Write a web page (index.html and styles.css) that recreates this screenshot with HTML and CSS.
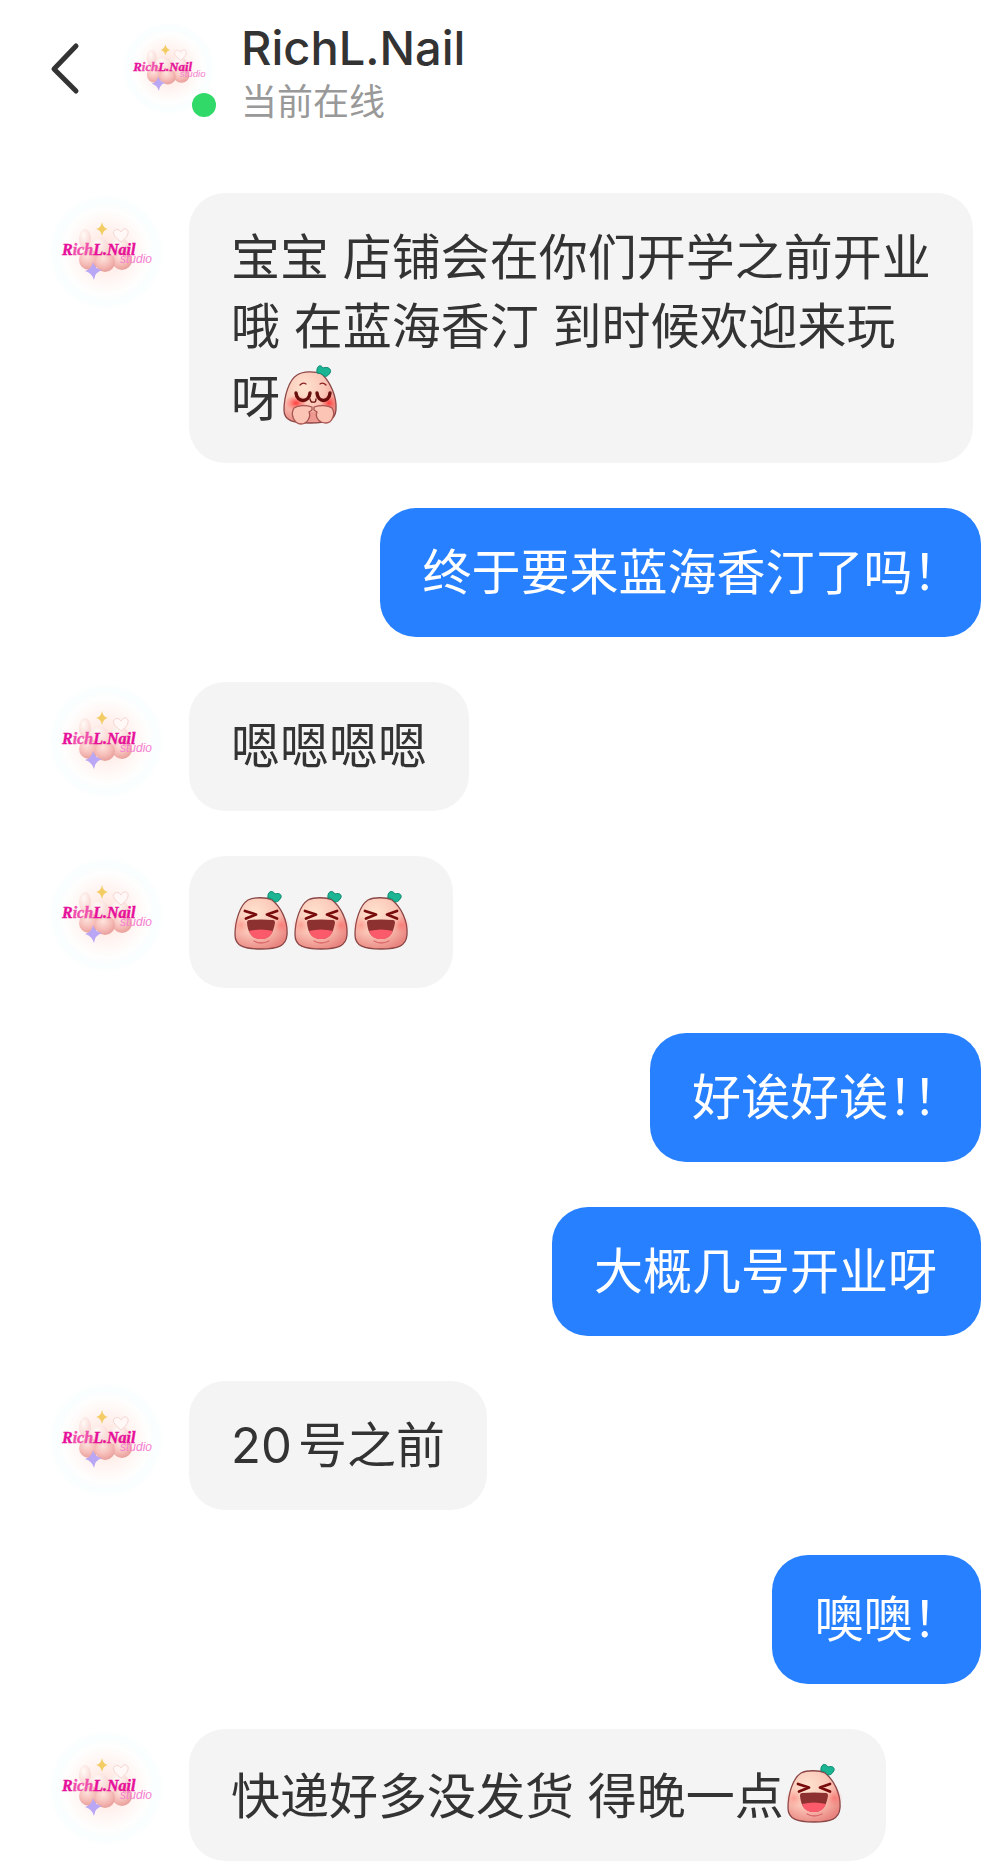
FILE: index.html
```html
<!DOCTYPE html>
<html lang="zh-CN">
<head>
<meta charset="UTF-8">
<meta name="viewport" content="width=device-width, initial-scale=1.0">
<title>RichL.Nail</title>
<link rel="stylesheet" href="styles.css">
</head>
<body>
    <!-- Shared drawings -->
    <svg class="sprite" width="0" height="0" aria-hidden="true">
        <defs>
            <radialGradient id="halo">
                <stop offset="0" stop-color="#ffe0d8"/>
                <stop offset="0.45" stop-color="#fff4f1"/>
                <stop offset="0.72" stop-color="#fefefd"/>
                <stop offset="0.88" stop-color="#f9fefe"/>
                <stop offset="1" stop-color="#ffffff"/>
            </radialGradient>
            <radialGradient id="pearl" cx="0.4" cy="0.3" r="0.7">
                <stop offset="0" stop-color="#fde3dd"/>
                <stop offset="0.6" stop-color="#f6bdb8"/>
                <stop offset="1" stop-color="#e9a09c"/>
            </radialGradient>
            <radialGradient id="pearlLight" cx="0.4" cy="0.3" r="0.7">
                <stop offset="0" stop-color="#fffaf6"/>
                <stop offset="1" stop-color="#f9d3d0"/>
            </radialGradient>
            <radialGradient id="skin" cx="0.38" cy="0.3" r="0.75">
                <stop offset="0" stop-color="#fee3cf"/>
                <stop offset="0.55" stop-color="#fbc6b7"/>
                <stop offset="1" stop-color="#e98580"/>
            </radialGradient>
            <radialGradient id="blush">
                <stop offset="0" stop-color="#ff3b3b"/>
                <stop offset="1" stop-color="#ff5a55" stop-opacity="0"/>
            </radialGradient>
        </defs>
        <symbol id="logo" viewBox="0 0 117 117">
            <circle cx="58" cy="59" r="58" fill="url(#halo)"/>
            <ellipse cx="37" cy="46" rx="6" ry="10" fill="url(#pearlLight)"/>
            <circle cx="51" cy="54" r="10" fill="url(#pearlLight)"/>
            <circle cx="71" cy="54" r="10" fill="url(#pearlLight)"/>
            <circle cx="41" cy="67" r="10" fill="url(#pearl)"/>
            <circle cx="74" cy="67" r="10" fill="url(#pearl)"/>
            <circle cx="57" cy="69" r="10" fill="url(#pearl)"/>
            <path d="M73 49c-5-4-9-8-7-11 2-3 6-1 7 1 2-4 6-4 7-1 1 4-3 8-7 11z" fill="#fff8f6" stroke="#f6d5d2"/>
            <path d="M54 29q1 6 6 7-5 1-6 7-1-6-6-7 5-1 6-7z" fill="#f3cc63"/>
            <path d="M45 69q2 7 9 8-7 2-8 10-2-7-9-9 7-2 8-9z" fill="#b9a6f5"/>
            <text class="logo-name" x="14" y="62"><tspan class="logo-strong">R</tspan>ich<tspan class="logo-strong">L.Nail</tspan></text>
            <text class="logo-studio" x="72" y="70">studio</text>
        </symbol>
        <symbol id="laugh" viewBox="0 0 60 66">
            <path d="M17 14C23 11 35 11 41 14C50 21 57 35 56 49C55 60 47 63 30 63C13 63 4 60 4 49C4 35 9 19 17 14Z" fill="url(#skin)" stroke="#8c4747" stroke-width="1.3"/>
            <circle cx="10" cy="39" r="9" fill="url(#blush)" opacity="0.3"/>
            <circle cx="50" cy="39" r="9" fill="url(#blush)" opacity="0.4"/>
            <path d="M37 12C36 6 41 3 44 8C49 6 52 10 49 13C48 15 46 16 44 16C42 13 40 12 37 12Z" fill="#1bb594" stroke="#0e8a70"/>
            <path d="M14 25L25 28.5L15 32.5M46 25L36 28.5L46 32.5" fill="none" stroke="#780b0b" stroke-width="2.8" stroke-linejoin="round" stroke-linecap="round"/>
            <path d="M18 34Q30 33 42 34Q44 34 44 37C42 48 38 53 30 53C22 53 17 48 16 37Q16 34 18 34Z" fill="#8c3030"/>
            <path d="M18 45Q30 42 42 45C39 51 36 53 30 53C24 53 20 51 18 45Z" fill="#fa5a6a"/>
            <path d="M23 55Q30 59 38 55" fill="none" stroke="#d9696b" stroke-width="1.3" stroke-linecap="round"/>
        </symbol>
        <symbol id="thanks" viewBox="0 0 60 66">
            <path d="M17 14C23 10 35 10 42 13C50 21 57 35 56 49C55 60 47 62 30 62C13 62 4 60 4 49C4 35 9 19 17 14Z" fill="url(#skin)" stroke="#8c4747" stroke-width="1.3"/>
            <ellipse cx="16" cy="42" rx="11" ry="8" fill="url(#blush)"/>
            <ellipse cx="49" cy="42" rx="8" ry="8" fill="url(#blush)"/>
            <path d="M37 12C36 6 40 2 43 7C49 5 52 9 50 12C48 15 46 16 44 15C42 13 40 12 37 12Z" fill="#1bb594" stroke="#0e8a70"/>
            <path d="M20 24Q23 21 26 23M40 23Q43 21 46 24" fill="none" stroke="#8a2020" stroke-width="1.3" stroke-linecap="round"/>
            <path d="M16 32C17 42 29 42 30 32M37 32C38 42 49 42 50 32" fill="none" stroke="#690d0d" stroke-width="3.4" stroke-linecap="round"/>
            <path d="M30 38Q31 42 33 41Q36 42 36 38" fill="none" stroke="#690d0d" stroke-width="1.3" stroke-linecap="round"/>
            <path d="M28 51H38V61H28Z" fill="#ee9a91"/>
            <path d="M32 46C26 44 18 44 14 47C10 53 14 63 21 63C28 63 31 55 29 51L32 49Z" fill="#fcc4b4" stroke="#a85450" stroke-width="1.3" stroke-linejoin="round"/>
            <path d="M34 46C40 44 48 44 52 47C56 53 52 62 46 62C38 62 35 55 37 51L34 49Z" fill="#fcc4b4" stroke="#a85450" stroke-width="1.3" stroke-linejoin="round"/>
        </symbol>
    </svg>

    <header class="header">
        <button class="back" type="button" aria-label="返回">
            <svg width="34" height="54" viewBox="0 0 34 54" aria-hidden="true"><path d="M28 5L6 28L28 50"/></svg>
        </button>
        <div class="contact">
            <svg class="contact-avatar" role="img" aria-label="头像"><use href="#logo"/></svg>
            <span class="online"></span>
        </div>
        <div class="title">
            <h1>RichL.Nail</h1>
            <p>当前在线</p>
        </div>
    </header>

    <main class="chat">
        <div class="row">
            <svg class="avatar" role="img" aria-label="头像"><use href="#logo"/></svg>
            <p class="bubble">宝宝 店铺会在你们开学之前开业哦 在蓝海香汀 到时候欢迎来玩呀<svg class="emoji" role="img" aria-label="感谢"><use href="#thanks"/></svg></p>
        </div>
        <div class="row mine">
            <p class="bubble">终于要来蓝海香汀了吗！</p>
        </div>
        <div class="row">
            <svg class="avatar" role="img" aria-label="头像"><use href="#logo"/></svg>
            <p class="bubble">嗯嗯嗯嗯</p>
        </div>
        <div class="row">
            <svg class="avatar" role="img" aria-label="头像"><use href="#logo"/></svg>
            <p class="bubble"><svg class="emoji" role="img" aria-label="大笑"><use href="#laugh"/></svg><svg class="emoji" role="img" aria-label="大笑"><use href="#laugh"/></svg><svg class="emoji" role="img" aria-label="大笑"><use href="#laugh"/></svg></p>
        </div>
        <div class="row mine">
            <p class="bubble">好诶好诶！！</p>
        </div>
        <div class="row mine">
            <p class="bubble">大概几号开业呀</p>
        </div>
        <div class="row">
            <svg class="avatar" role="img" aria-label="头像"><use href="#logo"/></svg>
            <p class="bubble">20号之前</p>
        </div>
        <div class="row mine">
            <p class="bubble">噢噢！</p>
        </div>
        <div class="row">
            <svg class="avatar" role="img" aria-label="头像"><use href="#logo"/></svg>
            <p class="bubble">快递好多没发货 得晚一点<svg class="emoji" role="img" aria-label="大笑"><use href="#laugh"/></svg></p>
        </div>
    </main>
</body>
</html>
```
FILE: styles.css
```css
* {
    box-sizing: border-box;
}

body {
    margin: 0;
    background-color: #fff;
    color: #333;
    font-family: Inter, "Noto Sans CJK SC", sans-serif;
}

h1, p {
    margin: 0;
}

.sprite {
    display: block;
}

/* Header */
.header {
    display: flex;
    align-items: flex-start;
    padding: 21px 21px 26px 48px;
}

.back {
    display: flex;
    align-items: center;
    height: 94px;
    margin-right: 40px;
    padding: 0;
    border: 0;
    background: none;
    cursor: pointer;
}

.back path {
    fill: none;
    stroke: #333;
    stroke-width: 5;
    stroke-linecap: round;
    stroke-linejoin: round;
}

.contact {
    position: relative;
    margin-right: 25px;
}

.contact-avatar {
    display: block;
    width: 94px;
    height: 94px;
}

.online {
    position: absolute;
    right: 0;
    bottom: -2px;
    width: 24px;
    height: 24px;
    border-radius: 50%;
    background-color: #30d968;
}

.title h1 {
    font-size: 47px;
    line-height: 54px;
    font-weight: 500;
}

.title p {
    margin-top: 7px;
    font-size: 36px;
    line-height: 40px;
    color: #999;
}

/* Messages */
.chat {
    display: flex;
    flex-direction: column;
    gap: 45px;
    padding: 45px 21px 3px 48px;
}

.row {
    display: flex;
    align-items: flex-start;
    gap: 24px;
    margin-right: 8px;
}

.avatar {
    flex: none;
    width: 117px;
    height: 117px;
}

.bubble {
    padding: 30px 42px;
    border-radius: 36px;
    background-color: #f4f4f4;
    font-size: 49px;
    line-height: 69px;
    text-autospace: normal;
}

.mine {
    justify-content: flex-end;
    margin-right: 0;
}

/* half-width punctuation */
.mine .bubble {
    padding-right: 44px;
    background-color: #2680ff;
    color: #fff;
    font-feature-settings: "halt";
}

.emoji {
    width: 60px;
    height: 66px;
    vertical-align: -11px;
}

/* Logo lettering */
.logo-name {
    font-family: "Liberation Serif", serif;
    font-size: 16px;
    font-weight: 700;
    font-style: italic;
    fill: #f04fae;
    stroke: #f04fae;
    stroke-width: 0.4;
}

.logo-strong {
    fill: #e6109a;
    stroke: #e6109a;
}

.logo-studio {
    font-family: "Liberation Sans", sans-serif;
    font-size: 12px;
    font-style: italic;
    fill: #f57fd0;
}
```
